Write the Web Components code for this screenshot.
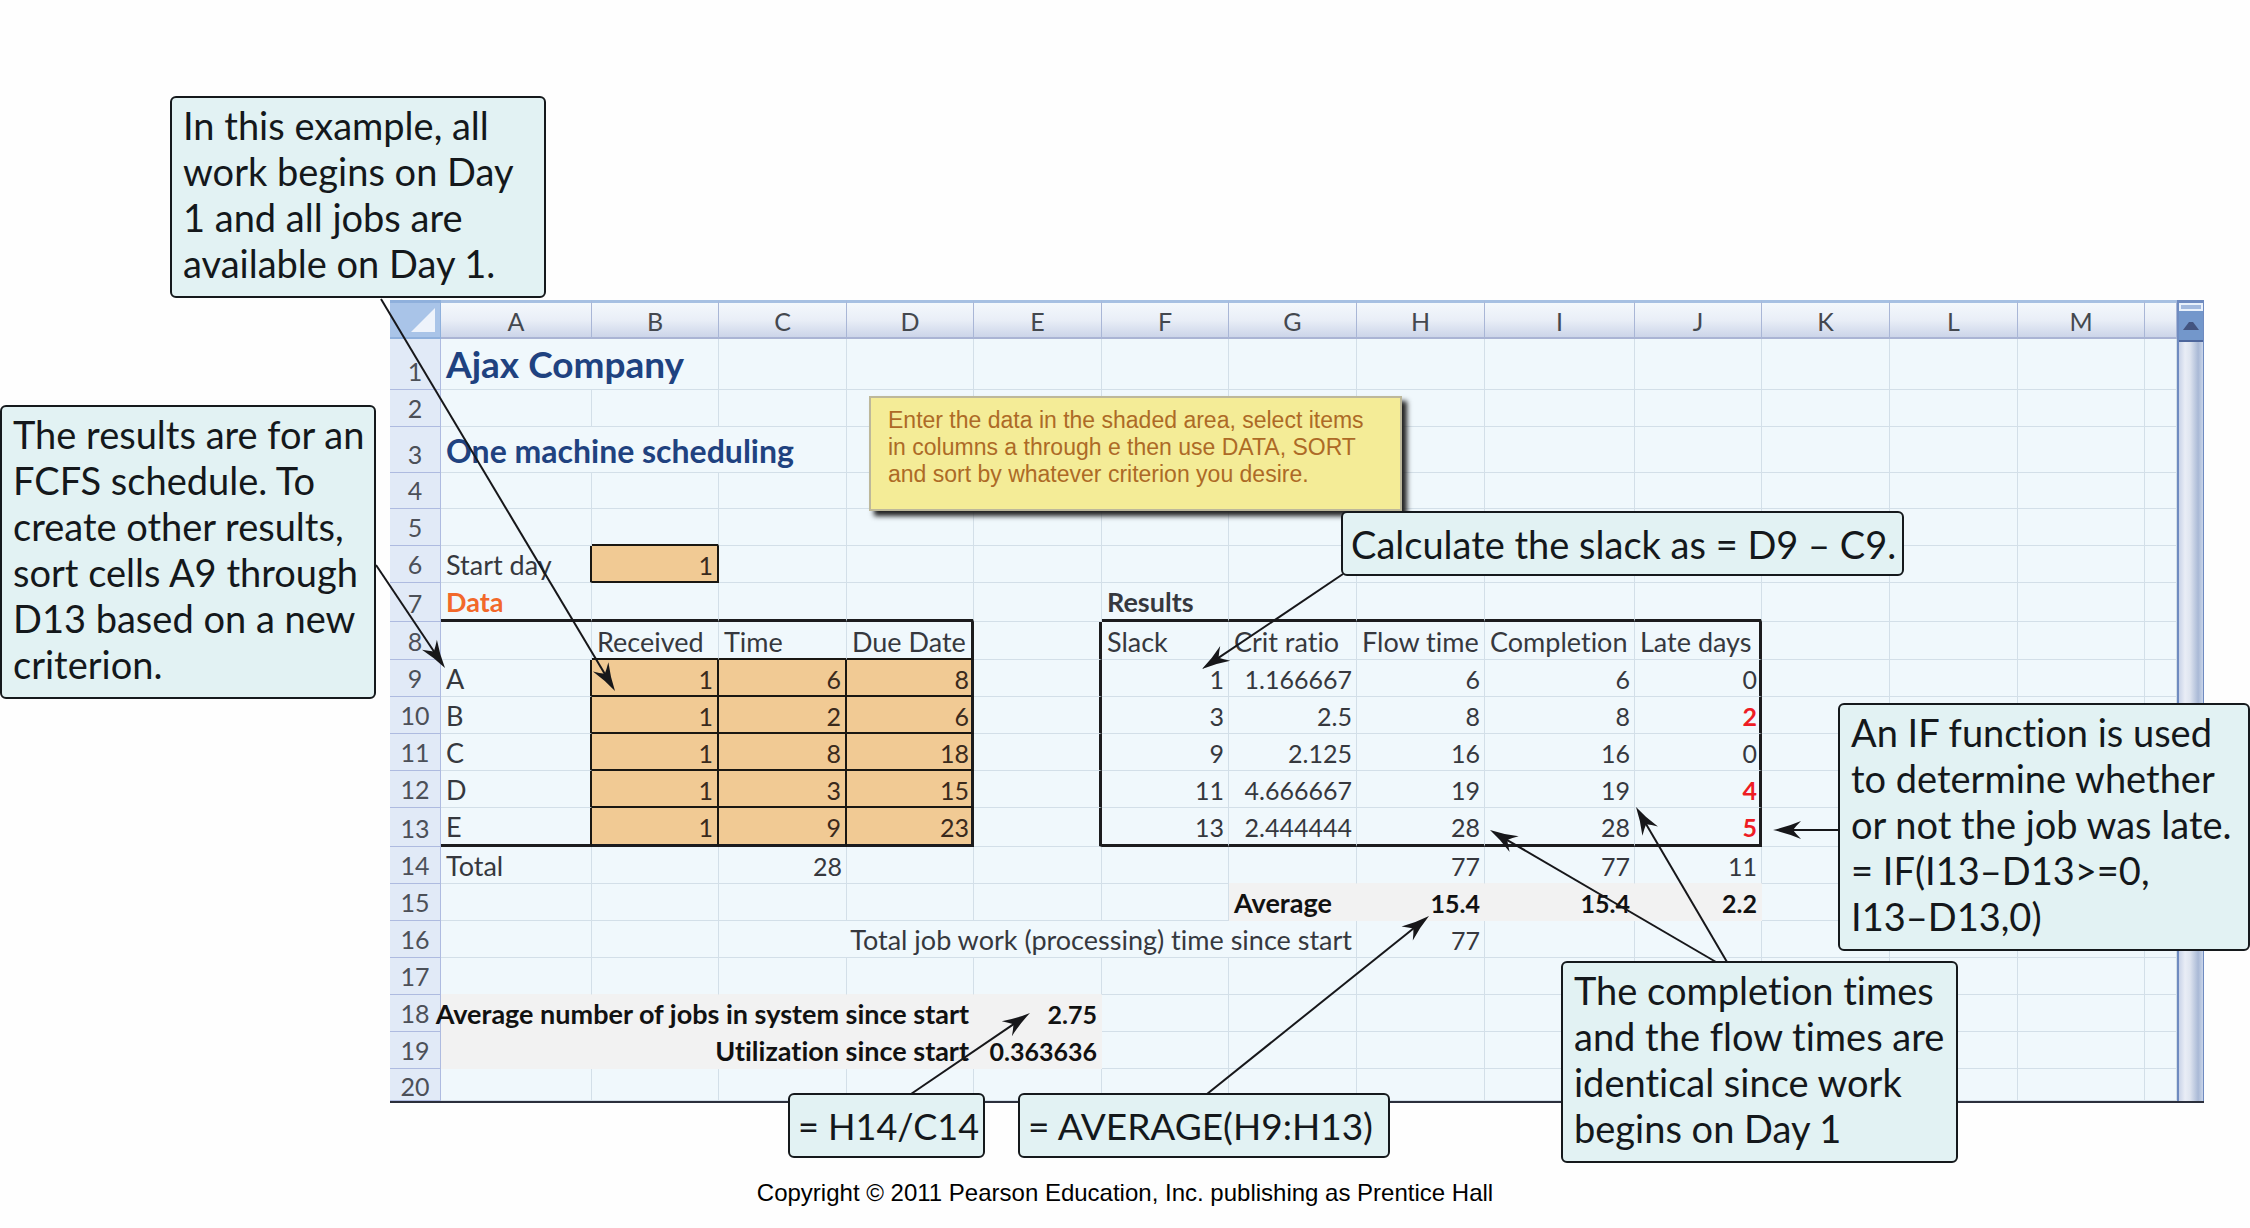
<!DOCTYPE html>
<html lang="en">
<head>
<meta charset="utf-8">
<title>Ajax Company – One machine scheduling</title>
<style>
  body { margin: 0; background: #fefefe; font-family: Lato, "Liberation Sans", sans-serif; font-variant-ligatures: none; }
</style>
</head>
<body>
<schedule-figure></schedule-figure>

<template id="figure-tpl">
  <style>
    :host { display: block; position: relative; overflow: hidden; }
    main { padding: 300px 46px 0 390px; }
    .sheet { display: flex; border-bottom: 2px solid #2b2f3c; }
    sheet-grid { flex: 1; min-width: 0; }
    call-out, sticky-note { position: absolute; }
    callout-arrows { position: absolute; top: 0; left: 0; pointer-events: none; }
    footer { padding: 76px 0 32px; text-align: center; font: 24px/28px "Liberation Sans", sans-serif; color: #000; }
    .note { left: 869px; top: 396px; }
    .begin { left: 170px; top: 96px; width: 376px; }
    .fcfs { left: 0; top: 405px; width: 376px; }
    .slack { left: 1341px; top: 511px; width: 563px; }
    .late { left: 1838px; top: 703px; width: 412px; }
    .same { left: 1561px; top: 961px; width: 397px; }
    .jobs { left: 788px; top: 1093px; width: 197px; font-size: 36px; }
    .avg { left: 1018px; top: 1093px; width: 372px; font-size: 37px; }
  </style>
  <main>
    <div class="sheet"><sheet-grid></sheet-grid><scroll-track></scroll-track></div>
  </main>
  <footer>Copyright © 2011 Pearson Education, Inc. publishing as Prentice Hall</footer>
  <sticky-note class="note">Enter the data in the shaded area, select items<br>in columns a through e then use DATA, SORT<br>and sort by whatever criterion you desire.</sticky-note>
  <callout-arrows></callout-arrows>
  <call-out class="begin">In this example, all<br>work begins on Day<br>1 and all jobs are<br>available on Day 1.</call-out>
  <call-out class="fcfs">The results are for an<br>FCFS schedule. To<br>create other results,<br>sort cells A9 through<br>D13 based on a new<br>criterion.</call-out>
  <call-out class="slack" line>Calculate the slack as = D9 – C9.</call-out>
  <call-out class="late">An IF function is used<br>to determine whether<br>or not the job was late.<br>= IF(I13–D13&gt;=0,<br>I13–D13,0)</call-out>
  <call-out class="same">The completion times<br>and the flow times are<br>identical since work<br>begins on Day 1</call-out>
  <call-out class="jobs" line>= H14/C14</call-out>
  <call-out class="avg" line>= AVERAGE(H9:H13)</call-out>
</template>

<template id="callout-tpl">
  <style>
    :host { display: block; box-sizing: border-box; padding: 4px 11px 10px; border: 2px solid #15191c; border-radius: 6px;
      background: #e2f2f3; color: #14181b; font-size: 38px; line-height: 46px; white-space: nowrap; }
    :host([line]) { padding: 8px 8px 7px; }
  </style>
  <slot></slot>
</template>

<template id="note-tpl">
  <style>
    :host { display: block; box-sizing: border-box; width: 533px; padding: 9px 17px 21px; border: 2px solid #bdb89a;
      background: #f4ec97; color: #ad6a26; font: 23px/27px "Liberation Sans", sans-serif; white-space: nowrap;
      box-shadow: 5px 5px 5px #222; }
  </style>
  <slot></slot>
</template>

<template id="track-tpl">
  <style>
    :host { display: flex; flex-direction: column; width: 27px; box-sizing: border-box; border: solid #6f8bc0; border-width: 3px 1px 0 2px;
      background: linear-gradient(90deg, #c9d3e8, #e9edf6 25%, #dfe5f0 45%, #a9b9d6 80%, #c9d5ea); }
    .split { height: 8px; box-sizing: border-box; border: 2px solid #e9f1fb; background: #a2b9de; }
    button { height: 31px; padding: 0; border: 0; border-bottom: 2px solid #4d669c; background: #7397cb; display: grid; place-items: center; }
    svg { display: block; }
  </style>
  <div class="split"></div>
  <button type="button" aria-label="Scroll up"><svg width="16" height="9" viewBox="0 0 16 9"><path d="M0 9 6 1h4l6 8z" fill="#43547f"/></svg></button>
</template>

<template id="grid-tpl">
  <style>
    :host { display: block; }
    table { table-layout: fixed; width: 100%; border-collapse: separate; border-spacing: 0; color: #36383e; font-size: 27px; line-height: 28px; }
    td, th { box-sizing: border-box; padding: 0 4px 3px 5px; border: solid #d3dfe8; border-width: 0 1px 1px 0; vertical-align: bottom;
      text-align: left; white-space: nowrap; font-weight: 400; background: #f0f8fc; }
    thead th { font-size: 25px; text-align: center; padding: 0 0 2px; color: #44484f; border-color: #a9b6d6; border-top: 3px solid #a7c0e2; border-bottom: 2px solid #aab4d4;
      background: linear-gradient(#f4f8fc, #e9eef7 50%, #ccd5e9); }
    th.row { font-size: 25px; text-align: center; padding: 0 0 4px; color: #4c5058; background: #e1eaf7; border-color: #aebbe0; }
    tr:last-child th.row { padding-bottom: 0; }
    thead th.corner { background: #a9c4e8; padding: 0 5px 5px 0; border-color: #8fb0dc; }
    .corner svg { display: block; margin-left: auto; }
    .r { text-align: right; }
    .n { font-size: 25px; }
    .b { font-weight: 700; color: #111; }
    .title { font-size: 37px; line-height: 44px; font-weight: 700; color: #1f4280; }
    .sub { font-size: 32px; line-height: 36px; font-weight: 700; color: #1f4280; }
    .orange { font-weight: 700; color: #f2682a; }
    .dark { font-weight: 700; }
    .red { font-weight: 700; color: #ee1c24; }
    .in { background: #f1ca94; border-color: #1a1712; border-width: 0 2px 2px 0; color: #3a2a1c; padding-bottom: 2px; }
    .sh { background: #f2f2f2; border-color: #f2f2f2; }
    .nb { border-bottom-color: #f2f2f2; }
    .R2 { border-right: 2px solid #1a1712; }
    .B2 { border-bottom: 2px solid #1a1712; padding-bottom: 2px; }
    .R3 { border-right: 3px solid #1c1c1e; padding-right: 2px; }
    .B3 { border-bottom: 3px solid #1c1c1e; padding-bottom: 3px; }
    .end { display: flex; justify-content: flex-end; }
  </style>
  <table><colgroup></colgroup><thead></thead><tbody></tbody></table>
</template>

<script>
const tpl = id => document.getElementById(id).content.cloneNode(true);
const define = (name, id, fill) => customElements.define(name, class extends HTMLElement {
  constructor() {
    super();
    this.attachShadow({ mode: 'open' }).append(tpl(id));
    if (fill) fill(this.shadowRoot);
  }
});

/* Column widths; the last column takes what is left. */
const COLS = [51, 151, 127, 128, 127, 128, 127, 128, 128, 150, 127, 128, 128, 127];
const HEIGHTS = [51, 37, 46, 36, 37, 37, 39, 38, 37, 37, 37, 37, 39, 37, 37, 37, 37, 37, 37, 32];
/* Cells by address: [text, classes, colspan] */
const CELLS = {
  A1: ['Ajax Company', 'title', 2],
  A3: ['One machine scheduling', 'sub', 3],
  B5: ['', 'B2'], A6: ['Start day', 'R2'], B6: ['1', 'in r n'],
  A7: ['Data', 'orange B3'], B7: ['', 'B3'], C7: ['', 'B3'], D7: ['', 'B3'],
  F7: ['Results', 'dark B3'], G7: ['', 'B3'], H7: ['', 'B3'], I7: ['', 'B3'], J7: ['', 'B3'],
  B8: ['Received', 'B2'], C8: ['Time', 'B2'], D8: ['Due Date', 'B2 R3'], E8: ['', 'R3'],
  F8: ['Slack', ''], G8: ['Crit ratio', ''], H8: ['Flow time', ''], I8: ['Completion', ''], J8: ['Late days', 'R3'],
  A14: ['Total', ''], C14: ['28', 'r n'],
  G14: ['', 'nb'], H14: ['77', 'r n nb'], I14: ['77', 'r n nb'], J14: ['11', 'r n nb'],
  G15: ['Average', 'b sh'], H15: ['15.4', 'b r n sh'], I15: ['15.4', 'b r n sh'], J15: ['2.2', 'b r n sh'],
  C16: ['Total job work (processing) time since start', 'r', 5], H16: ['77', 'r n'],
  A17: ['', 'nb'], B17: ['', 'nb'], C17: ['', 'nb'], D17: ['', 'nb'], E17: ['', 'nb'],
  A18: ['<div class="end">Average number of jobs in system since start</div>', 'b sh', 4], E18: ['2.75', 'b r n sh'],
  A19: ['Utilization since start', 'b r sh', 4], E19: ['0.363636', 'b r n sh']
};
const JOBS = [
  ['A', 1, 6, 8, 1, '1.166667', 6, 6, 0],
  ['B', 1, 2, 6, 3, '2.5', 8, 8, 2],
  ['C', 1, 8, 18, 9, '2.125', 16, 16, 0],
  ['D', 1, 3, 15, 11, '4.666667', 19, 19, 4],
  ['E', 1, 9, 23, 13, '2.444444', 28, 28, 5]
];
JOBS.forEach((j, i) => {
  const n = 9 + i, end = i === 4 ? ' B3' : '';
  CELLS['A' + n] = [j[0], 'R2' + end];
  CELLS['B' + n] = [j[1], 'in r n' + end];
  CELLS['C' + n] = [j[2], 'in r n' + end];
  CELLS['D' + n] = [j[3], 'in r n R3' + end];
  CELLS['E' + n] = ['', 'R3'];
  ['F', 'G', 'H', 'I'].forEach((c, k) => CELLS[c + n] = [j[4 + k], 'r n' + end]);
  CELLS['J' + n] = [j[8], 'r n R3' + end + (j[8] > 0 ? ' red' : '')];
});

define('sheet-grid', 'grid-tpl', root => {
  const letters = [...'ABCDEFGHIJKLM', ''];
  root.querySelector('colgroup').innerHTML = COLS.map(w => `<col style="width:${w}px">`).join('') + '<col>';
  root.querySelector('thead').innerHTML = '<tr style="height:39px"><th class="corner"><svg width="24" height="24" viewBox="0 0 24 24"><path d="M24 0v24H0z" fill="#eef3fb"/></svg></th>' +
    letters.map(l => `<th scope="col">${l}</th>`).join('') + '</tr>';
  root.querySelector('tbody').innerHTML = HEIGHTS.map((h, r) => {
    let html = `<tr style="height:${h}px"><th class="row" scope="row">${r + 1}</th>`;
    for (let c = 0; c < letters.length;) {
      const [text, cls, span = 1] = CELLS[letters[c] + (r + 1)] || ['', ''];
      html += `<td class="${cls}" colspan="${span}">${text}</td>`;
      c += span;
    }
    return html + '</tr>';
  }).join('');
});
define('scroll-track', 'track-tpl');
define('call-out', 'callout-tpl');
define('sticky-note', 'note-tpl');

/* Connector lines: from a callout to the tip at a cell. */
const ARROWS = [
  [381, 299, 615, 691], [376, 565, 445, 668], [1343, 574, 1202, 669], [1838, 830, 1773, 830],
  [1716, 962, 1490, 830], [1727, 962, 1636, 807], [911, 1094, 1030, 1013], [1207, 1094, 1429, 916]
];
customElements.define('callout-arrows', class extends HTMLElement {
  constructor() {
    super();
    this.attachShadow({ mode: 'open' }).innerHTML =
      '<style>:host{display:block}svg{display:block}</style><svg width="2204" height="1160" aria-hidden="true">' +
      ARROWS.map(([x1, y1, x2, y2]) => {
        const a = Math.atan2(y2 - y1, x2 - x1), d = a * 180 / Math.PI;
        return `<path d="M${x1} ${y1}L${x2 - 18 * Math.cos(a)} ${y2 - 18 * Math.sin(a)}" stroke="#17171a" stroke-width="2"/>` +
          `<path transform="translate(${x2} ${y2}) rotate(${d})" d="M0 0Q-14 -3 -28 -9Q-23 -4 -20 0Q-23 4 -28 9Q-14 3 0 0z" fill="#17171a"/>`;
      }).join('') + '</svg>';
  }
});
define('schedule-figure', 'figure-tpl');
</script>
</body>
</html>
